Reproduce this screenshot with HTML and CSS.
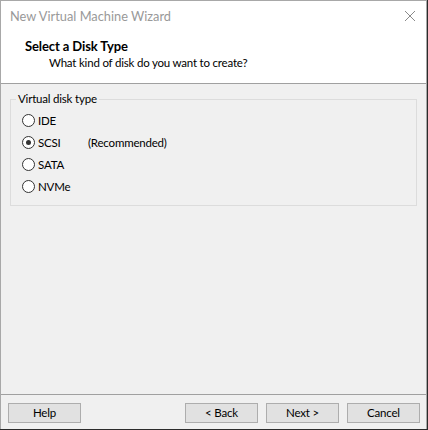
FILE: index.html
```html
<!DOCTYPE html>
<html>
<head>
<meta charset="utf-8">
<link rel="stylesheet" href="styles.css">
</head>
<body>
<div class="window">
  <div class="titlebar">
    <span class="title">New Virtual Machine Wizard</span>
    <svg class="close" width="12" height="12" viewBox="0 0 12 12"><path d="M1 1L11 11M11 1L1 11" stroke="#8a8a8a" stroke-width="1" fill="none"/></svg>
  </div>
  <div class="header">
    <div class="h-title">Select a Disk Type</div>
    <div class="h-sub">What kind of disk do you want to create?</div>
  </div>
  <div class="body">
    <fieldset class="group">
      <legend>Virtual disk type</legend>
      <label class="radio"><span class="dot"></span><span>IDE</span></label>
      <label class="radio"><span class="dot checked"></span><span class="lbl">SCSI</span><span>(Recommended)</span></label>
      <label class="radio"><span class="dot"></span><span>SATA</span></label>
      <label class="radio"><span class="dot"></span><span>NVMe</span></label>
    </fieldset>
  </div>
  <div class="footer">
    <button class="btn">Help</button>
    <div class="spacer"></div>
    <button class="btn">&lt; Back</button>
    <button class="btn">Next &gt;</button>
    <button class="btn">Cancel</button>
  </div>
</div>
</body>
</html>
```
FILE: styles.css
```css
html, body { margin: 0; padding: 0; background: #2b2b2b; }
body { width: 428px; height: 430px; overflow: hidden; font-family: "Lato", "Segoe UI", sans-serif; font-size: 11.5px; letter-spacing: -0.2px; color: #000; }
.window { width: 425px; height: 428px; border: 1px solid #a8a8a8; border-bottom: none; background: #f0f0f0; display: flex; flex-direction: column; box-sizing: content-box; }
.titlebar { height: 31px; background: #fff; display: flex; align-items: center; justify-content: space-between; padding: 0 10px 2px 9px; box-sizing: border-box; flex: none; }
.title { color: #999; font-size: 12.8px; letter-spacing: 0; }
.close { margin-top: 0; }
.header { height: 52px; background: #fff; border-bottom: 1px solid #a0a0a0; padding: 6px 0 0 24px; box-sizing: border-box; flex: none; }
.h-title { font-weight: bold; line-height: 16px; font-size: 13px; letter-spacing: -0.1px; }
.h-sub { padding-left: 24px; line-height: 16px; margin-top: 1px; }
.body { flex: 1; padding: 8px 9px 0 9px; }
.group { margin: 0; border: 1px solid #dcdcdc; padding: 3px 0 8px 11px; height: 114px; box-sizing: border-box; }
.group legend { padding: 0 2px; margin-left: -6px; line-height: 14px; }
.radio { display: flex; align-items: center; height: 22px; }
.dot { width: 11px; height: 11px; border: 1px solid #333; border-radius: 50%; background: #fff; margin-right: 3px; position: relative; flex: none; }
.dot.checked::after { content: ""; position: absolute; left: 3px; top: 3px; width: 5px; height: 5px; border-radius: 50%; background: #333; }
.lbl { width: 50px; }
.footer { height: 34px; border-top: 1px solid #a0a0a0; display: flex; align-items: flex-start; padding: 8px 6px 0 7px; gap: 8px; box-sizing: border-box; flex: none; margin-bottom: 1px; }
.spacer { flex: 1; }
.btn { width: 73px; height: 20px; background: #e1e1e1; border: 1px solid #adadad; font-family: inherit; font-size: 11.5px; letter-spacing: -0.2px; padding: 0; color: #000; line-height: 18px; }
```
